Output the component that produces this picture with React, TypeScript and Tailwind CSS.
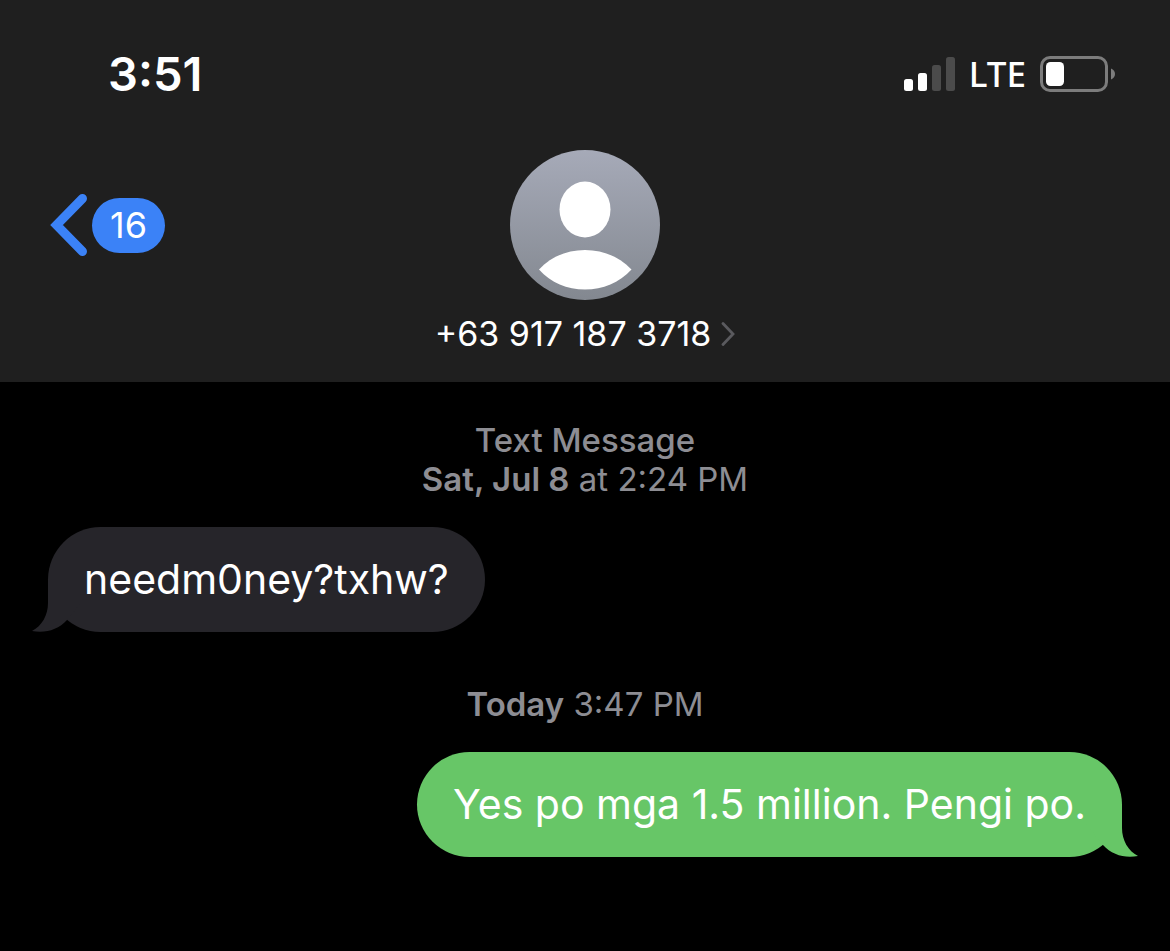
import React from "react";

type IMessage = {
  id: number;
  text: string;
  isMine: boolean;
  service?: string;
  day: string;
  time: string;
};

const messages: IMessage[] = [
  {
    id: 1,
    text: "needm0ney?txhw?",
    isMine: false,
    service: "Text Message",
    day: "Sat, Jul 8",
    time: "at 2:24 PM",
  },
  {
    id: 2,
    text: "Yes po mga 1.5 million. Pengi po.",
    isMine: true,
    day: "Today",
    time: "3:47 PM",
  },
];

const SignalIcon = () => (
  <svg width="51" height="34" viewBox="0 0 51 34" aria-hidden="true">
    <rect x="0" y="22" width="9" height="12" rx="2.5" fill="#fff" />
    <rect x="14" y="16" width="9" height="18" rx="2.5" fill="#fff" />
    <rect x="28" y="8" width="9" height="26" rx="2.5" fill="#4b4b4b" />
    <rect x="42" y="0" width="9" height="34" rx="2.5" fill="#4b4b4b" />
  </svg>
);

const BatteryIcon = () => (
  <svg width="75" height="36" viewBox="0 0 75 36" aria-hidden="true">
    <rect
      x="1.5"
      y="1.5"
      width="65"
      height="33"
      rx="8.5"
      fill="none"
      stroke="#7c7c7c"
      strokeWidth="3"
    />
    <rect x="6" y="6" width="18" height="24" rx="4.5" fill="#fff" />
    <path d="M71 12.5c2.6 1 4 3 4 5.500s-1.400 4.500-4 5.500z" fill="#7c7c7c" />
  </svg>
);

const Avatar = () => (
  <svg width="150" height="150" viewBox="0 0 150 150" aria-hidden="true">
    <defs>
      <linearGradient id="avatar" x1="0" y1="0" x2="0" y2="1">
        <stop offset="0" stopColor="#a6aab8" />
        <stop offset="1" stopColor="#838890" />
      </linearGradient>
    </defs>
    <circle cx="75" cy="75" r="75" fill="url(#avatar)" />
    <ellipse cx="75" cy="59.5" rx="25.5" ry="28" fill="#fff" />
    <path
      d="M29 119.5C41 106.500 57 100 75 100s34 6.500 46.500 19.500C109 133 93 139.500 75 139.500S41 133 29 119.500z"
      fill="#fff"
    />
  </svg>
);

const Bubble: React.FC<{ text: string; isMine: boolean }> = ({
  text,
  isMine,
}) => (
  <div className={isMine ? "flex justify-end" : "flex justify-start"}>
    <div
      className={
        isMine
          ? "relative rounded-[53px] bg-[#67c667] px-9 py-6 text-[#67c667]"
          : "relative rounded-[53px] bg-[#26252a] px-9 py-6 text-[#26252a]"
      }
    >
      <p className="text-[41px] leading-[57px] text-white">{text}</p>
      <svg
        className={
          isMine
            ? "absolute -right-4 bottom-0 -scale-x-100"
            : "absolute -left-4 bottom-0"
        }
        width="52"
        height="53"
        viewBox="0 0 52 53"
        aria-hidden="true"
      >
        <path
          d="M16 0V24C16 36 10 47 0 52C13 54.500 26 51 35 41L52 20V0z"
          fill="currentColor"
        />
      </svg>
    </div>
  </div>
);

const App: React.FC = () => {
  return (
    <div className="min-h-screen bg-black font-['Inter',sans-serif] text-white">
      <header className="bg-[#1f1f1f] pb-7">
        <div className="flex h-[102px] items-center justify-between pt-[46px] pr-[55px] pl-[108px]">
          <span className="text-[47px] leading-[54px] font-semibold">3:51</span>
          <div className="flex items-center gap-3.5">
            <SignalIcon />
            <span className="font-['Noto_Sans',sans-serif] text-[35px] leading-10 font-medium">
              LTE
            </span>
            <BatteryIcon />
          </div>
        </div>

        <div className="grid grid-cols-[1fr_auto_1fr] items-center px-[50px] pt-12">
          <button
            type="button"
            aria-label="Back, 16 unread"
            className="flex items-center gap-1 justify-self-start"
          >
            <svg width="38" height="64" viewBox="0 0 38 64" aria-hidden="true">
              <path
                d="M32.5 5.500L6.500 32L32.500 58.500"
                fill="none"
                stroke="#3b82f7"
                strokeWidth="9"
                strokeLinecap="round"
                strokeLinejoin="miter"
              />
            </svg>
            <span className="flex h-[55px] w-[73px] items-center justify-center rounded-full bg-[#3b82f7] text-4xl">
              16
            </span>
          </button>
          <Avatar />
        </div>

        <button
          type="button"
          className="mx-auto mt-3.5 flex items-center gap-2.5 text-[34px] leading-10"
        >
          +63 917 187 3718
          <svg width="14" height="24" viewBox="0 0 14 24" aria-hidden="true">
            <path
              d="M2 1.500L12 12L2 22.500"
              fill="none"
              stroke="#5a5a5e"
              strokeWidth="2.8"
              strokeLinecap="round"
            />
          </svg>
        </button>
      </header>

      <main className="flex flex-col gap-[53px] px-12 pt-[39px] pb-24">
        {messages.map((message) => (
          <section key={message.id} className="flex flex-col gap-7">
            <p className="text-center text-[33px] leading-[39px] text-[#8d8d93]">
              {message.service && (
                <span className="block font-medium">{message.service}</span>
              )}
              <span className="font-semibold">{message.day}</span>{" "}
              {message.time}
            </p>
            <Bubble text={message.text} isMine={message.isMine} />
          </section>
        ))}
      </main>
    </div>
  );
};

export default App;
